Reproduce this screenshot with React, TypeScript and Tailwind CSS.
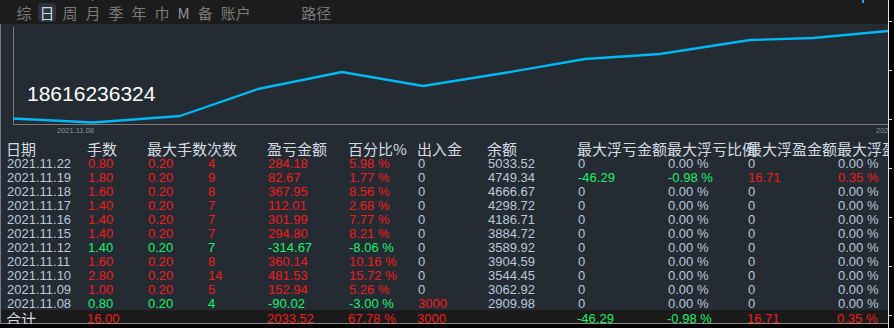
import React from 'react';

const R = 'text-[#f21b1b]';
const G = 'text-[#1cf06a]';
const N = 'text-[#b9c8dc]';

const widths = ['w-[81px]', 'w-[60px]', 'w-[60px]', 'w-[60px]', 'w-[81px]', 'w-[69px]', 'w-[70px]', 'w-[90px]', 'w-[90px]', 'w-[80px]', 'w-[90px]', 'w-[60px]'];

const headers = ['日期', '手数', '最大手数', '次数', '盈亏金额', '百分比%', '出入金', '余额', '最大浮亏金额', '最大浮亏比例', '最大浮盈金额', '最大浮盈比例'];

// date, lots, max lots, count, pnl, pct, in/out, balance, max loss, loss %, max win, win %
const rows: any[] = [
  ['2021.11.22', '0.80', '0.20', '4', '284.18', '5.98 %', '0', '5033.52', '0', '0.00 %', '0', '0.00 %'],
  ['2021.11.19', '1.80', '0.20', '9', '82.67', '1.77 %', '0', '4749.34', '-46.29', '-0.98 %', '16.71', '0.35 %'],
  ['2021.11.18', '1.60', '0.20', '8', '367.95', '8.56 %', '0', '4666.67', '0', '0.00 %', '0', '0.00 %'],
  ['2021.11.17', '1.40', '0.20', '7', '112.01', '2.68 %', '0', '4298.72', '0', '0.00 %', '0', '0.00 %'],
  ['2021.11.16', '1.40', '0.20', '7', '301.99', '7.77 %', '0', '4186.71', '0', '0.00 %', '0', '0.00 %'],
  ['2021.11.15', '1.40', '0.20', '7', '294.80', '8.21 %', '0', '3884.72', '0', '0.00 %', '0', '0.00 %'],
  ['2021.11.12', '1.40', '0.20', '7', '-314.67', '-8.06 %', '0', '3589.92', '0', '0.00 %', '0', '0.00 %'],
  ['2021.11.11', '1.60', '0.20', '8', '360.14', '10.16 %', '0', '3904.59', '0', '0.00 %', '0', '0.00 %'],
  ['2021.11.10', '2.80', '0.20', '14', '481.53', '15.72 %', '0', '3544.45', '0', '0.00 %', '0', '0.00 %'],
  ['2021.11.09', '1.00', '0.20', '5', '152.94', '5.26 %', '0', '3062.92', '0', '0.00 %', '0', '0.00 %'],
  ['2021.11.08', '0.80', '0.20', '4', '-90.02', '-3.00 %', '3000', '2909.98', '0', '0.00 %', '0', '0.00 %'],
];

const points = [
  [13, 94.5], [93, 98.5], [180, 92], [258, 65], [342, 48], [423, 62], [504, 49],
  [585, 35], [660, 30], [750, 16], [813, 14], [888, 7],
];

function cellColor(v: string, i: number) {
  if (i === 0 || i === 7) return N;
  if (v === '0' || v === '0.00 %') return N;
  if (v.startsWith('-')) return G;
  return R;
}

function Row({ r }: { r: string[] }) {
  const loss = r[4].startsWith('-');
  return (
    <div className="flex h-[14px] items-center pl-[6px] text-[13px] leading-none whitespace-nowrap">
      {r.map((v, i) => {
        let c = cellColor(v, i);
        if (i >= 1 && i <= 3) c = loss ? G : R;
        return (
          <div key={i} className={`${widths[i]} shrink-0 ${c}`}>{v}</div>
        );
      })}
    </div>
  );
}

export default function App() {
  const tabs = ['综', '日', '周', '月', '季', '年', '巾', 'M', '备', '账户'];
  return (
    <div className="relative w-[894px] h-[328px] bg-black flex overflow-hidden" style={{ fontFamily: '"Liberation Sans", Arial, "Noto Sans CJK SC", sans-serif' }}>
      <div className="w-[888px] shrink-0 flex flex-col">
        {/* tab bar */}
        <div className="h-[24px] bg-[#1c1c1c] flex items-center pl-[15px] text-[15px] text-[#7a7a7a] leading-none" style={{ fontFamily: '"Noto Sans CJK SC", sans-serif' }}>
          {tabs.map((t) => (
            <span
              key={t}
              className={`mr-[5px] px-[1.5px] py-[2px] rounded-sm ${t === '日' ? 'bg-[#2c333c] text-[#d0d8e4]' : ''} ${t === 'M' ? 'text-[#8a94a0]' : ''}`}
            >
              {t}
            </span>
          ))}
          <span className="ml-[44px]">路径</span>
        </div>

        {/* chart */}
        <div className="relative h-[116px] bg-[#252b33] border-l border-[#6e7c8c] overflow-hidden">
          <svg width="887" height="116" className="block">
            <line x1="12.5" y1="3" x2="12.5" y2="100" stroke="#7a7a7a" strokeWidth="1" />
            <line x1="12" y1="100.5" x2="888" y2="100.5" stroke="#7a7a7a" strokeWidth="1" />
            <polyline
              points={points.map((p) => `${p[0] - 1},${p[1]}`).join(' ')}
              fill="none"
              stroke="#00b8f4"
              strokeWidth="2.3"
              strokeLinejoin="round"
            />
          </svg>
          <div className="absolute left-[26px] top-[59px] text-[21px] leading-none text-white">18616236324</div>
          <div className="absolute left-[56px] top-[103px] text-[7.5px] leading-none text-[#8a9099]">2021.11.08</div>
          <div className="absolute left-[875px] top-[103px] text-[7.5px] leading-none text-[#8a9099]">2021.11.22</div>
        </div>

        {/* table */}
        <div className="bg-[#252b33] border-l border-[#6e7c8c] overflow-hidden">
          <div className="flex h-[16px] items-center pl-[5px] text-[15px] leading-none text-[#d4dbe3] whitespace-nowrap" style={{ fontFamily: '"Noto Sans CJK SC", sans-serif' }}>
            {headers.map((h, i) => (
              <div key={i} className={`${widths[i]} shrink-0`}>{h}</div>
            ))}
          </div>
          {rows.map((r) => (
            <Row key={r[0]} r={r} />
          ))}
          <div className="flex h-[13px] items-center pl-[5px] bg-[#1b1b1b] text-[13px] leading-none whitespace-nowrap border-b border-[#8a8a8a] box-content">
            <div className="w-[81px] shrink-0 text-[15px] text-[#d4dbe3] pt-[3px]" style={{ fontFamily: '"Noto Sans CJK SC", sans-serif' }}>合计</div>
            <div className={`w-[180px] shrink-0 pt-[4px] ${R}`}>16.00</div>
            <div className={`w-[81px] shrink-0 pt-[4px] ${R}`}>2033.52</div>
            <div className={`w-[69px] shrink-0 pt-[4px] ${R}`}>67.78 %</div>
            <div className={`w-[70px] shrink-0 pt-[4px] ${R}`}>3000</div>
            <div className="w-[90px] shrink-0" />
            <div className={`w-[90px] shrink-0 pt-[4px] ${G}`}>-46.29</div>
            <div className={`w-[80px] shrink-0 pt-[4px] ${G}`}>-0.98 %</div>
            <div className={`w-[90px] shrink-0 pt-[4px] ${R}`}>16.71</div>
            <div className={`w-[60px] shrink-0 pt-[4px] ${R}`}>0.35 %</div>
          </div>
        </div>
        <div className="flex-1 bg-black" />
      </div>

      {/* right scale strip */}
      <div className="w-[6px] shrink-0 border-l border-[#e0e0e0] bg-black flex flex-col pt-[21px] gap-[48px]">
        {[0, 1, 2, 3, 4, 5, 6].map((i) => (
          <div key={i} className="h-px w-[3px] bg-[#e0e0e0]" />
        ))}
      </div>

      {/* stray chart marks over the tab bar */}
      <div className="absolute left-[862px] top-0 w-[2px] h-[3px] bg-[#3a9cf0]" />
      <div className="absolute left-[92px] top-0 w-[1px] h-[1px] bg-[#9ab020]" />
    </div>
  );
}
